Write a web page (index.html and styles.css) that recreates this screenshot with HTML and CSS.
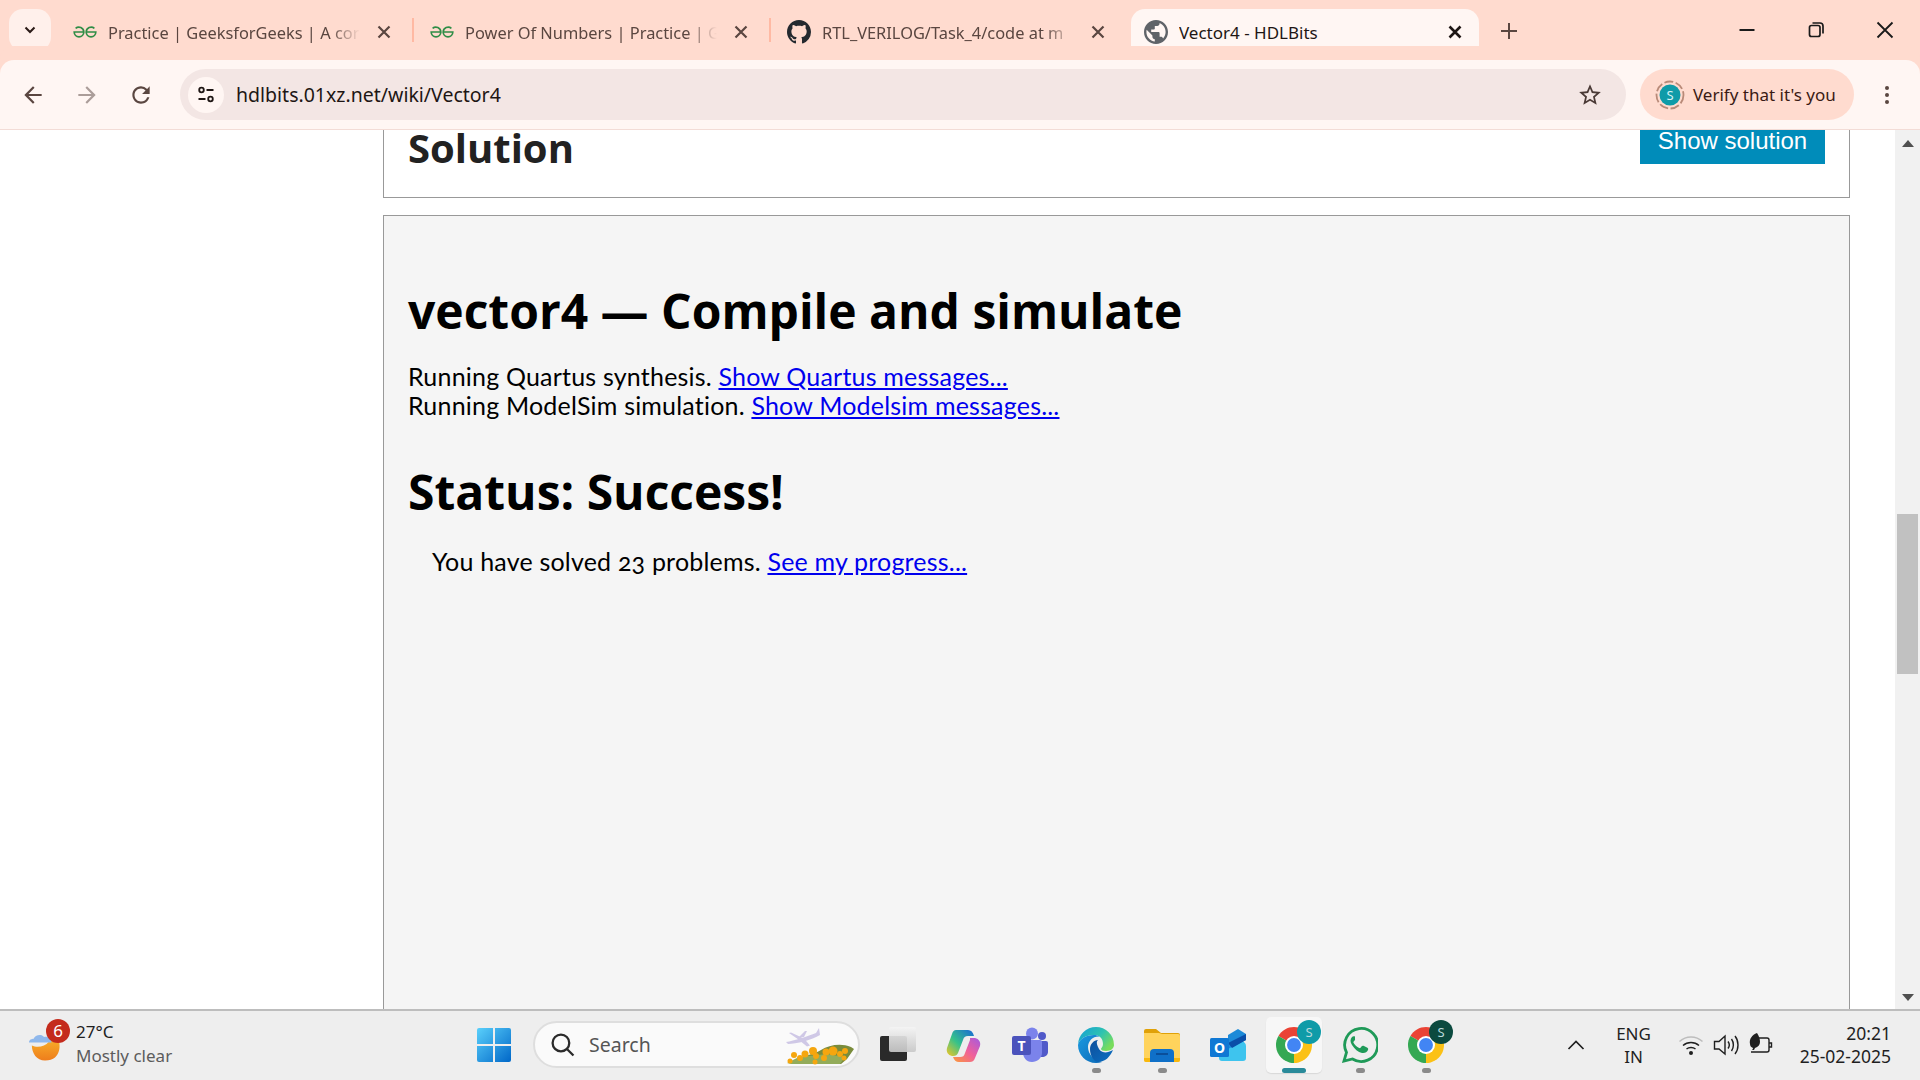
FILE: index.html
```html
<!DOCTYPE html>
<html lang="en">
<head>
<meta charset="utf-8">
<title>Vector4 - HDLBits</title>
<link rel="stylesheet" href="styles.css">
</head>
<body>
<header class="tabstrip">
  <button class="tabsearch"><svg class="ic14" viewBox="0 0 14 14"><path d="M2.5 4.5 7 9l4.500-4.500" fill="none" stroke="#2a1a16" stroke-width="2"/></svg></button>
  <div class="tab">
    <svg class="favicon" viewBox="0 0 24 12"><path fill="none" stroke="#2f8d46" stroke-width="1.700" d="M2.600 2.300A5 5 0 0 1 10.800 6H1.200A4.800 4.800 0 0 0 10.800 6M21.400 2.300A5 5 0 0 0 13.200 6H22.800A4.800 4.800 0 0 1 13.200 6"/></svg>
    <span class="tabtitle">Practice | GeeksforGeeks | A cor</span>
    <svg class="close" viewBox="0 0 24 24"><path d="M6.500 6.500l11 11m0-11l-11 11" stroke="#5a4640" stroke-width="2.200" fill="none"/></svg>
    <i class="sep"></i>
  </div>
  <div class="tab">
    <svg class="favicon" viewBox="0 0 24 12"><path fill="none" stroke="#2f8d46" stroke-width="1.700" d="M2.600 2.300A5 5 0 0 1 10.800 6H1.200A4.800 4.800 0 0 0 10.800 6M21.400 2.300A5 5 0 0 0 13.200 6H22.800A4.800 4.800 0 0 1 13.200 6"/></svg>
    <span class="tabtitle">Power Of Numbers | Practice | G</span>
    <svg class="close" viewBox="0 0 24 24"><path d="M6.500 6.500l11 11m0-11l-11 11" stroke="#5a4640" stroke-width="2.200" fill="none"/></svg>
    <i class="sep"></i>
  </div>
  <div class="tab">
    <svg class="favicon" viewBox="0 0 16 16"><path fill="#24292f" d="M8 0C3.580 0 0 3.580 0 8c0 3.540 2.290 6.530 5.470 7.590.4.07.55-.17.55-.38 0-.19-.01-.82-.01-1.490-2.010.37-2.530-.49-2.690-.94-.09-.23-.48-.94-.82-1.130-.28-.15-.68-.52-.01-.53.63-.01 1.080.58 1.230.82.72 1.210 1.870.87 2.330.66.07-.52.28-.87.51-1.070-1.780-.2-3.640-.89-3.640-3.950 0-.87.31-1.590.82-2.150-.08-.2-.36-1.020.08-2.120 0 0 .67-.21 2.200.82.64-.18 1.320-.27 2-.27.68 0 1.360.09 2 .27 1.530-1.040 2.200-.82 2.200-.82.44 1.100.16 1.920.08 2.120.51.56.82 1.270.82 2.150 0 3.070-1.870 3.750-3.650 3.950.29.25.54.73.54 1.480 0 1.070-.01 1.930-.01 2.200 0 .21.15.46.55.38A8.013 8.013 0 0 0 16 8c0-4.420-3.580-8-8-8z"/></svg>
    <span class="tabtitle">RTL_VERILOG/Task_4/code at m</span>
    <svg class="close" viewBox="0 0 24 24"><path d="M6.500 6.500l11 11m0-11l-11 11" stroke="#5a4640" stroke-width="2.200" fill="none"/></svg>
  </div>
  <div class="tab active">
    <svg class="favicon" viewBox="2 2 20 20"><path fill="#5f6368" d="M12 2C6.480 2 2 6.480 2 12s4.480 10 10 10 10-4.480 10-10S17.520 2 12 2zm-1 17.930c-3.950-.49-7-3.850-7-7.930 0-.62.08-1.210.21-1.790L9 15v1c0 1.100.9 2 2 2v1.930zm6.900-2.540c-.26-.81-1-1.390-1.900-1.390h-1v-3c0-.55-.45-1-1-1H8v-2h2c.55 0 1-.45 1-1V7h2c1.100 0 2-.9 2-2v-.41c2.930 1.190 5 4.060 5 7.410 0 2.080-.8 3.970-2.100 5.390z"/></svg>
    <span class="tabtitle">Vector4 - HDLBits</span>
    <svg class="close" viewBox="0 0 24 24"><path d="M6.500 6.500l11 11m0-11l-11 11" stroke="#1e1614" stroke-width="2.600" fill="none"/></svg>
  </div>
  <svg class="newtab" viewBox="0 0 24 24"><path d="M12 4v16M4 12h16" stroke="#5a4640" stroke-width="2" fill="none"/></svg>
  <div class="winbtns">
    <svg class="ic20" viewBox="0 0 20 20"><path d="M2.500 10h15" stroke="#1a1a1a" stroke-width="2"/></svg>
    <svg class="ic20" viewBox="0 0 20 20"><g fill="none" stroke="#1a1a1a" stroke-width="1.700"><rect x="3.500" y="5.500" width="10.500" height="11" rx="2"/><path d="M6.500 3h7.500a3 3 0 0 1 3 3v7.500"/></g></svg>
    <svg class="ic20" viewBox="0 0 20 20"><path d="M2.500 2.500l15 15m0-15l-15 15" stroke="#1a1a1a" stroke-width="1.800" fill="none"/></svg>
  </div>
</header>

<nav class="toolbar">
  <svg class="navicon" viewBox="0 0 24 24"><path fill="#5a4640" d="M20 11H7.830l5.590-5.590L12 4l-8 8 8 8 1.410-1.410L7.830 13H20v-2z"/></svg>
  <svg class="navicon" viewBox="0 0 24 24"><path fill="#ab9d99" d="M4 11h12.170l-5.590-5.590L12 4l8 8-8 8-1.410-1.410L16.170 13H4v-2z"/></svg>
  <svg class="navicon" viewBox="0 0 24 24"><path fill="#5a4640" d="M17.650 6.350A7.958 7.958 0 0 0 12 4c-4.420 0-7.990 3.580-7.990 8s3.570 8 7.990 8c3.730 0 6.840-2.550 7.730-6h-2.080A5.990 5.990 0 0 1 12 18c-3.310 0-6-2.690-6-6s2.690-6 6-6c1.660 0 3.140.69 4.220 1.780L13 11h7V4l-2.350 2.350z"/></svg>
  <div class="omnibox">
    <span class="siteinfo"><svg class="ic20" viewBox="0 0 20 20"><g fill="none" stroke="#1e1614" stroke-width="1.800"><circle cx="5.500" cy="5" r="2.300"/><path d="M10.500 5h7M2.500 14h7"/><circle cx="14.500" cy="14" r="2.300"/></g></svg></span>
    <span class="url">hdlbits.01xz.net/wiki/Vector4</span>
    <svg class="star" viewBox="0 0 24 24"><path fill="#4a3a36" d="M22 9.240l-7.190-.62L12 2 9.190 8.630 2 9.240l5.460 4.730L5.820 21 12 17.270 18.180 21l-1.630-7.030L22 9.240zM12 15.400l-3.760 2.270 1-4.280-3.320-2.880 4.380-.38L12 6.100l1.710 4.040 4.380.38-3.320 2.880 1 4.280L12 15.400z"/></svg>
  </div>
  <div class="verify">
    <svg class="avatar" viewBox="0 0 30 30"><circle cx="15" cy="15" r="13.500" fill="none" stroke="#b98a78" stroke-width="1.800" stroke-dasharray="9 2.500"/><circle cx="15" cy="15" r="10.500" fill="#0f9ba8"/><text x="15" y="19.500" text-anchor="middle" class="avatar-s">S</text></svg>
    <span>Verify that it's you</span>
  </div>
  <svg class="dots" viewBox="0 0 6 24"><g fill="#5a4640"><circle cx="3" cy="5" r="2"/><circle cx="3" cy="12" r="2"/><circle cx="3" cy="19" r="2"/></g></svg>
</nav>

<div class="page">
  <main class="content">
    <section class="box solution">
      <h2 class="soltitle">Solution</h2>
      <button class="showbtn">Show solution</button>
    </section>
    <section class="box result">
      <h1>vector4 — Compile and simulate</h1>
      <p class="log">Running Quartus synthesis. <a href="#q">Show Quartus messages...</a><br>Running ModelSim simulation. <a href="#m">Show Modelsim messages...</a></p>
      <h2>Status: Success!</h2>
      <p class="solved">You have solved 23 problems. <a href="#p">See my progress...</a></p>
    </section>
  </main>
  <aside class="scrollbar">
    <i class="arrow up"></i>
    <i class="thumb"></i>
    <i class="arrow down"></i>
  </aside>
</div>

<footer class="taskbar">
  <div class="weather">
    <div class="wicon">
      <svg viewBox="0 0 36 34" class="ic-weather"><defs><linearGradient id="moon" x1="0" y1="0" x2="0" y2="1"><stop offset="0" stop-color="#f9b62b"/><stop offset="1" stop-color="#ee7d1c"/></linearGradient></defs><path fill="url(#moon)" d="M3 18c6 3 14 1 18-4 2-2 4-6 8-6 5 5 7 26-12 26C8 34 3 26 3 18z"/><path fill="#8fb8ec" d="M0 15c0-3 3-4 5-4 1-4 8-6 11-2 3-1 7 1 8 6z"/></svg>
      <span class="badge">6</span>
    </div>
    <div class="wtext"><span class="temp">27°C</span><span class="cond">Mostly clear</span></div>
  </div>
  <div class="startcell">
    <svg class="ic36" viewBox="0 0 36 36"><defs><linearGradient id="win" x1="0" y1="0" x2="1" y2="1"><stop offset="0" stop-color="#5ad0fb"/><stop offset="1" stop-color="#0067c8"/></linearGradient></defs><path fill="url(#win)" d="M1 3a2 2 0 0 1 2-2h14v16H1zM19 1h14a2 2 0 0 1 2 2v14H19zM1 19h16v16H3a2 2 0 0 1-2-2zM19 19h16v14a2 2 0 0 1-2 2H19z"/></svg>
  </div>
  <div class="search">
    <svg class="searchicon" viewBox="0 0 24 24"><g fill="none" stroke="#2a2a2a" stroke-width="2.200"><circle cx="10.500" cy="10.500" r="8"/><path d="M16.500 16.500l6 6"/></g></svg>
    <span class="searchtext">Search</span>
    <svg class="searchart" viewBox="0 0 70 38"><g fill="#cfc8e6"><path d="M1 15c8-1 22-6 30-9l3-5 1 7c-8 5-24 9-32 9z"/><path d="M4 6l2-.500 13 6 6 7-3 1-10-8z"/><path d="M14 10l6-6 2 0-3 6z"/></g><path fill="#7a8c3c" d="M10 36c6-8 18-8 26-13 8-5 20-7 30-3l3 2-7 10-6 5z"/><path fill="#93ac5a" d="M2 36l12-6 28-3 18 3-5 7H6z"/><g fill="#f5a60f"><circle cx="5" cy="34" r="2.500"/><circle cx="9" cy="28" r="3"/><circle cx="15" cy="31" r="3"/><circle cx="20" cy="27" r="3.500"/><circle cx="28" cy="24" r="4"/><circle cx="31" cy="29" r="3"/><circle cx="30" cy="35" r="2.500"/><circle cx="39" cy="31" r="3"/><circle cx="41" cy="25" r="3.500"/><circle cx="48" cy="24" r="4.500"/><circle cx="55" cy="27" r="3"/><circle cx="60" cy="24" r="3"/><circle cx="59" cy="31" r="2.500"/></g></svg>
  </div>
  <div class="apps">
    <div class="app">
      <svg class="ic36" viewBox="0 0 36 36"><defs><linearGradient id="tv" x1="0" y1="0" x2="0" y2="1"><stop offset="0" stop-color="#f4f4f4"/><stop offset="1" stop-color="#c8c8c8"/></linearGradient></defs><rect x="0" y="9" width="27" height="25" rx="2" fill="#2a2a2a"/><rect x="9" y="0" width="27" height="25" rx="2" fill="url(#tv)" fill-opacity=".92"/></svg>
    </div>
    <div class="app">
      <svg class="ic36" viewBox="0 0 36 36"><defs><linearGradient id="co1" x1="0" y1="1" x2="1" y2="0"><stop offset="0" stop-color="#f3c623"/><stop offset=".45" stop-color="#35c28a"/><stop offset="1" stop-color="#1668d8"/></linearGradient><linearGradient id="co2" x1="1" y1="0" x2="0" y2="1"><stop offset="0" stop-color="#a45be0"/><stop offset=".5" stop-color="#f0609a"/><stop offset="1" stop-color="#fb9a3a"/></linearGradient></defs><path fill="url(#co1)" d="M10 3h12c3 0 5 2 6 6H22c-3 0-4 1-5 4l-5 13c-1 2-2 3-5 3H6c-4-1-6-4-5-8l5-14c1-3 2-4 4-4z"/><path fill="url(#co2)" d="M24 11h5c4 1 6 4 5 8l-5 12c-1 3-3 4-5 4H13c-3 0-5-2-6-5h7c3 0 4-1 5-4l5-13c0-1 0-2 0-2z"/></svg>
    </div>
    <div class="app">
      <svg class="ic36" viewBox="0 0 36 36"><circle cx="20" cy="6.500" r="6" fill="#7b83eb"/><circle cx="30" cy="9" r="4" fill="#5059c9"/><path fill="#5059c9" d="M25 14h9a2 2 0 0 1 2 2v9c0 3-3 5-6 5s-5-2-5-5z"/><path fill="#7b83eb" d="M11 13h17a2 2 0 0 1 2 2v11c0 5-5 9-10 9-6 0-9-5-9-9z"/><rect x="0" y="9" width="19" height="19" rx="2" fill="#4b53bc"/><text x="9.500" y="24" text-anchor="middle" class="teams-t">T</text></svg>
    </div>
    <div class="app withdot">
      <svg class="ic36" viewBox="0 0 36 36"><defs><linearGradient id="ed1" x1="0" y1="0" x2="1" y2=".6"><stop offset="0" stop-color="#139dd8"/><stop offset=".6" stop-color="#2fc3b0"/><stop offset="1" stop-color="#78dc5c"/></linearGradient><linearGradient id="ed2" x1="0" y1="0" x2="1" y2="1"><stop offset="0" stop-color="#1b9ae0"/><stop offset="1" stop-color="#0c6ab8"/></linearGradient><linearGradient id="ed3" x1="0" y1="0" x2="1" y2="1"><stop offset="0" stop-color="#0e4f9c"/><stop offset="1" stop-color="#0a6fc2"/></linearGradient></defs><path fill="url(#ed1)" d="M0 18A18 18 0 0 1 36 18c0 3-3 6-8 6-3 0-5-1-5-2 0-1 2-2 2-5 0-6-4-9-9-9C8 8 1 12 0 18z"/><path fill="url(#ed2)" d="M0 18c1-6 8-10 16-10 2 0 4 .5 5.500 1.500C15 9 10 14 10 20c0 7 6 14 14 15-2 .7-4 1-6 1C8 36 0 28 0 18z"/><path fill="url(#ed3)" d="M12 22c0-5 4-9 8-9-2 2-1 4 0 7 2 6 8 7 15 3-3 7-8 12-15 12-5-1-8-7-8-13z"/></svg>
      <i class="dot"></i>
    </div>
    <div class="app withdot">
      <svg class="ic36" viewBox="0 0 36 34"><path fill="#e0a108" d="M0 3a2 2 0 0 1 2-2h10l5 4h17a2 2 0 0 1 2 2v4H0z"/><path fill="#ffd35c" d="M0 5h15l3 1h16a2 2 0 0 1 2 2v24a2 2 0 0 1-2 2H2a2 2 0 0 1-2-2z"/><path fill="#f8b80e" d="M0 30h6v4H2a2 2 0 0 1-2-2zM30 30h6v2a2 2 0 0 1-2 2h-4z"/><path fill="#0f70c8" d="M6 25a4 4 0 0 1 4-4h16a4 4 0 0 1 4 4v9H6z"/><rect x="12" y="25" width="12" height="2" fill="#0a4f9a"/></svg>
      <i class="dot"></i>
    </div>
    <div class="app">
      <svg class="ic36" viewBox="0 0 36 32"><path fill="#3ec4ee" d="M7 16l24-5c3 2 5 3 5 6v12a3 3 0 0 1-3 3H12a3 3 0 0 1-3-3z"/><path fill="#1c8ad8" d="M18 6l10-6 8 5v6l-18 9z"/><path fill="#0a4ea8" d="M18 14l18-9v6l-14 8z"/><rect x="0" y="9" width="19" height="19" rx="1.500" fill="#0f78d4"/><text x="9.500" y="24" text-anchor="middle" class="outlook-o">O</text></svg>
    </div>
    <div class="app active">
      <svg class="ic36" viewBox="2 2 44 44"><path fill="#ea4335" d="M24 24L4.950 13A22 22 0 0 1 43.050 13z"/><path fill="#fbc116" d="M24 24l19.050-11A22 22 0 0 1 24 46z"/><path fill="#34a853" d="M24 24v22A22 22 0 0 1 4.950 13z"/><circle cx="24" cy="24" r="11" fill="#fff"/><circle cx="24" cy="24" r="8.500" fill="#4285f4"/></svg>
      <span class="profile teal">S</span>
      <i class="activebar"></i>
    </div>
    <div class="app withdot">
      <svg class="ic36" viewBox="0 0 36 36"><path fill="none" stroke="#1f9a58" stroke-width="2.800" d="M2 34l2.500-8.500A16.500 16.500 0 1 1 10.500 32z"/><path fill="#1f9a58" d="M13 9.500c-1-.5-2-.5-3 .5-2 2-2 5 0 8 2.500 4 6 7 10 8 3 .5 5-1 6-3 .5-1.500 0-2-1-2.500l-3.500-1.700c-.8-.3-1.300-.2-1.800.5l-1.200 1.500c-.4.400-.8.400-1.300.2-2.500-1-4.500-3-5.700-5.200-.2-.5-.1-.9.200-1.200l1.100-1.300c.3-.4.4-.9.200-1.300z"/></svg>
      <i class="dot"></i>
    </div>
    <div class="app withdot">
      <svg class="ic36" viewBox="2 2 44 44"><path fill="#ea4335" d="M24 24L4.950 13A22 22 0 0 1 43.050 13z"/><path fill="#fbc116" d="M24 24l19.050-11A22 22 0 0 1 24 46z"/><path fill="#34a853" d="M24 24v22A22 22 0 0 1 4.950 13z"/><circle cx="24" cy="24" r="11" fill="#fff"/><circle cx="24" cy="24" r="8.500" fill="#4285f4"/></svg>
      <span class="profile dark">S</span>
      <i class="dot"></i>
    </div>
  </div>
  <div class="tray">
    <div class="traycell chev"><svg class="ic20" viewBox="0 0 20 20"><path d="M2.500 14l7.500-7.500 7.500 7.500" fill="none" stroke="#1f1f1f" stroke-width="1.700"/></svg></div>
    <div class="lang"><span>ENG</span><span>IN</span></div>
    <div class="traycell"><svg class="ic26" viewBox="0 0 26 26"><g fill="none" stroke-width="1.500"><path d="M1.500 9.500c6.500-6 16.500-6 23 0" stroke="#bdbdbd"/><path d="M5 13.500c4.500-4 11.500-4 16 0M8.500 17c2.500-2 6.500-2 9 0" stroke="#1f1f1f"/></g><circle cx="13" cy="21" r="2" fill="#1f1f1f"/></svg></div>
    <div class="traycell"><svg class="ic26" viewBox="0 0 26 26"><g fill="none" stroke="#1f1f1f" stroke-width="1.400"><path d="M1.500 9.500h4.500l6-5.500v18l-6-5H1.500z"/><path d="M15 9.500c1.500 2 1.500 5 0 7M18.500 7c2.500 3.500 2.500 8.500 0 12M22 4c4 5 4 13 0 18"/></g></svg></div>
    <div class="traycell"><svg class="ic26" viewBox="0 0 26 26"><g fill="none" stroke="#1f1f1f" stroke-width="1.400"><path d="M10 6h9a2 2 0 0 1 2 2v10a2 2 0 0 1-2 2H3"/><path d="M21 11h2.500v4H21"/></g><path fill="#1f1f1f" d="M9 1C4 3 1 7 2 12c0 2 1 3 3 4 0 1-1 2-1 2h2l1-2c3-1 5-3 5-6S11 4 9 1z"/></svg></div>
    <div class="clock"><span>20:21</span><span>25-02-2025</span></div>
  </div>
</footer>
</body>
</html>
```

FILE: styles.css
```css
* { box-sizing: border-box; }
html, body { margin: 0; height: 100%; }
body {
  display: flex;
  flex-direction: column;
  height: 100vh;
  overflow: hidden;
  background: #fff;
  font-family: "Noto Sans", sans-serif;
}
svg { display: block; flex: none; }
.ic14 { width: 14px; height: 14px; }
.ic20 { width: 20px; height: 20px; }
.ic26 { width: 26px; height: 26px; }
.ic36 { width: 36px; height: 36px; }

/* tab strip */
.tabstrip {
  height: 60px;
  flex: none;
  display: flex;
  align-items: flex-end;
  padding-left: 9px;
  background: #ffdbcf;
}
.tabsearch {
  width: 42px;
  height: 42px;
  margin: 0 6px 9px 0;
  padding: 0;
  border: 0;
  border-radius: 14px;
  background: #fff0eb;
  display: flex;
  align-items: center;
  justify-content: center;
}
.tab {
  position: relative;
  width: 357px;
  height: 51px;
  display: flex;
  align-items: center;
  padding: 0 18px 5px 16px;
  color: #5a4640;
  font-size: 16.400px;
}
.tab:nth-of-type(3) { margin-right: 3px; }
.favicon { width: 24px; height: 24px; margin-right: 11px; }
.tabtitle {
  flex: 1;
  min-width: 0;
  margin-right: 12px;
  overflow: hidden;
  white-space: nowrap;
  -webkit-mask-image: linear-gradient(90deg, #000 calc(100% - 30px), transparent);
  mask-image: linear-gradient(90deg, #000 calc(100% - 30px), transparent);
}
.close { width: 24px; height: 24px; }
.sep {
  position: absolute;
  right: 0;
  top: 9px;
  width: 2px;
  height: 24px;
  background: #ffb9a3;
}
.tab.active {
  width: 348px;
  padding: 0 12px 5px 13px;
  background: #fff6f3;
  border-radius: 14px 14px 0 0;
  color: #1e1614;
  font-size: 17px;
}
.tab.active .tabtitle { -webkit-mask-image: none; mask-image: none; }
.tab.active::before, .tab.active::after {
  content: "";
  position: absolute;
  bottom: 0;
  width: 14px;
  height: 14px;
}
.tab.active::before { left: -14px; background: radial-gradient(circle at 0 0, transparent 13.500px, #fff6f3 14px); }
.tab.active::after { right: -14px; background: radial-gradient(circle at 100% 0, transparent 13.500px, #fff6f3 14px); }
.newtab { width: 24px; height: 24px; margin: 0 0 17px 18px; }
.winbtns {
  margin: 0 25px 20px auto;
  display: flex;
  gap: 49px;
}

/* toolbar */
.toolbar {
  height: 70px;
  flex: none;
  display: flex;
  align-items: center;
  padding: 0 0 0 20px;
  background: #fff6f3;
  border-bottom: 1px solid #f3dcd6;
  border-radius: 14px 14px 0 0;
  box-shadow: 0 -14px 0 #ffdbcf;
  position: relative;
}
.navicon { width: 26px; height: 26px; margin-right: 28px; }
.navicon:nth-of-type(3) { margin-right: 26px; }
.omnibox {
  width: 1446px;
  height: 51px;
  display: flex;
  align-items: center;
  padding: 0 23px 0 8px;
  border-radius: 26px;
  background: #f3e6e4;
}
.siteinfo {
  width: 36px;
  height: 36px;
  margin-right: 12px;
  border-radius: 50%;
  background: #fff6f3;
  display: flex;
  align-items: center;
  justify-content: center;
}
.url { flex: 1; font-size: 19.500px; color: #1e1614; }
.star { width: 26px; height: 26px; }
.verify {
  width: 214px;
  height: 51px;
  margin-left: 14px;
  display: flex;
  align-items: center;
  gap: 8px;
  padding-left: 15px;
  border-radius: 26px;
  background: #ffdbcf;
  color: #3a1a14;
  font-size: 17px;
  white-space: nowrap;
}
.avatar { width: 30px; height: 30px; }
.avatar-s { font: 13px "Noto Sans", sans-serif; fill: #d8f3f5; }
.dots { width: 6px; height: 24px; margin-left: 30px; }

/* page */
.page {
  flex: 1;
  min-height: 0;
  display: flex;
}
.content {
  flex: 1;
  min-width: 0;
  display: flex;
  flex-direction: column;
  padding: 0 45px 0 383px;
  overflow: hidden;
  font-family: Lato, sans-serif;
  font-size: 25px;
  letter-spacing: .2px;
  line-height: 29px;
  color: #000;
}
.box {
  border: 1px solid #999;
  padding-left: 24px;
}
.solution {
  height: 68px;
  flex: none;
  border-top: 0;
  display: flex;
  justify-content: space-between;
  padding-right: 24px;
}
.soltitle { color: #222; font-size: 40px; line-height: 36px; }
h1, h2 {
  margin: 0;
  font-family: "Open Sans", sans-serif;
  font-weight: 700;
  letter-spacing: 0;
}
h1 { font-size: 48px; line-height: 60px; }
.showbtn {
  width: 185px;
  height: 34px;
  border: 0;
  padding: 0 0 12px;
  background: #008cba;
  color: #fff;
  font: 24px/22px "Liberation Sans", sans-serif;
}
.result {
  flex: 1;
  margin-top: 17px;
  border-bottom: 0;
  background: #f5f5f5;
}
.result h1 { margin-top: 65px; }
.log { margin: 21px 0 0; }
.result h2 { margin-top: 43px; font-size: 48px; line-height: 58px; }
.solved { margin: 26px 0 0 24px; font-variant-numeric: oldstyle-nums; }
a { color: #00e; }

.scrollbar {
  width: 25px;
  flex: none;
  display: flex;
  flex-direction: column;
  align-items: center;
  background: #f1f1f1;
}
.arrow {
  width: 0;
  height: 0;
  border-left: 6px solid transparent;
  border-right: 6px solid transparent;
}
.arrow.up { margin-top: 10px; border-bottom: 7px solid #505050; }
.arrow.down { margin-top: auto; margin-bottom: 8px; border-top: 7px solid #505050; }
.thumb { width: 21px; height: 160px; margin-top: 367px; background: #c1c1c1; }

/* taskbar */
.taskbar {
  height: 71px;
  flex: none;
  display: flex;
  align-items: center;
  padding: 0 29px 2px 0;
  background: #eee;
  border-top: 2px solid #bdbdbd;
  color: #1f1f1f;
  font-size: 17px;
}
.weather {
  width: 461px;
  display: flex;
  align-items: center;
  padding-left: 29px;
  gap: 13px;
}
.wicon { position: relative; width: 34px; height: 34px; }
.ic-weather { width: 34px; height: 33px; }
.badge {
  position: absolute;
  left: 17px;
  top: -9px;
  width: 24px;
  height: 24px;
  border-radius: 50%;
  background: #c42b1c;
  color: #fff;
  font-size: 17px;
  line-height: 24px;
  text-align: center;
}
.wtext { display: flex; flex-direction: column; line-height: 24px; margin-top: -1px; }
.cond { color: #5c5c5c; }
.startcell { width: 66px; display: flex; justify-content: center; }
.search {
  width: 327px;
  height: 47px;
  margin: 0 5px 0 6px;
  display: flex;
  align-items: center;
  padding: 0 3px 0 15px;
  border: 2px solid #dedede;
  border-radius: 24px;
  background: #fafafa;
  color: #555;
  font-size: 19.500px;
}
.searchicon { width: 25px; height: 25px; margin-right: 14px; }
.searchtext { flex: 1; }
.searchart { width: 70px; height: 38px; margin-top: 3px; }
.apps { display: flex; }
.app {
  position: relative;
  width: 66px;
  height: 56px;
  display: flex;
  align-items: center;
  justify-content: center;
}
.app.active {
  width: 56px;
  margin: 0 5px;
  border-radius: 5px;
  background: #f7f7f7;
  box-shadow: 0 1px 1px #d8d8d8;
}
.dot {
  position: absolute;
  left: 50%;
  bottom: 0;
  width: 9px;
  height: 5px;
  margin-left: -4px;
  border-radius: 3px;
  background: #8a8a8a;
}
.activebar {
  position: absolute;
  left: 16px;
  bottom: 0;
  width: 24px;
  height: 5px;
  border-radius: 3px;
  background: #2a8a9a;
}
.profile {
  position: absolute;
  left: 50%;
  top: 3px;
  width: 24px;
  height: 24px;
  margin-left: 3px;
  border-radius: 50%;
  color: #b9d9dc;
  font-size: 13px;
  line-height: 24px;
  text-align: center;
}
.profile.teal { background: #0f9ba8; }
.profile.dark { background: #0b4a3f; }
.teams-t { font: 700 14px "Noto Sans", sans-serif; fill: #fff; }
.outlook-o { font: 700 14px "Noto Sans", sans-serif; fill: #fff; }
.tray { margin-left: auto; display: flex; align-items: center; }
.traycell { width: 35px; display: flex; justify-content: center; }
.traycell.chev { width: 40px; margin-right: 10px; }
.lang {
  width: 55px;
  margin-right: 12px;
  display: flex;
  flex-direction: column;
  align-items: center;
  line-height: 23px;
}
.clock {
  width: 113px;
  display: flex;
  flex-direction: column;
  align-items: flex-end;
  font-size: 17.500px;
  line-height: 23px;
}
```
